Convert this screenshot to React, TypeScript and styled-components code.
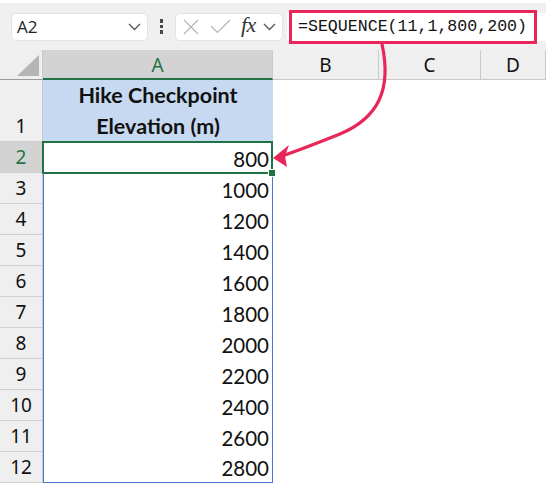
import React from 'react';
import styled, { createGlobalStyle } from 'styled-components';

const GlobalStyle = createGlobalStyle`
  * { box-sizing: border-box; }
  body {
    margin: 0;
    background: #fff;
    overflow: hidden;
  }
`;

const COLS = '43px 230px 106px 102px 1fr';
const GREEN = '#217346';
const RED = '#e8265a';
const SPILL = '#4a78cc';

const Page = styled.div`
  position: relative;
  width: 546px;
  height: 484px;
  overflow: hidden;
  font-family: 'Noto Sans', 'Open Sans', sans-serif;
`;

const Toolbar = styled.div`
  height: 50px;
  background: #f0f0f0;
  display: flex;
  align-items: center;
  padding: 0 0 0 11px;
  border-top: 3px solid #fff;
`;

const NameBox = styled.div`
  width: 137px;
  height: 28px;
  background: #fff;
  border-radius: 5px;
  border: 1px solid #e4e4e4;
  display: flex;
  align-items: center;
  justify-content: space-between;
  padding: 0 6px 0 5px;
  font-family: 'Open Sans', 'Noto Sans', sans-serif;
  font-size: 17px;
  color: #222;
`;

const Dots = styled.div`
  width: 27px;
  display: flex;
  flex-direction: column;
  align-items: center;
  gap: 2px;

  span {
    width: 3.5px;
    height: 3.5px;
    background: #4a4a4a;
  }
`;

const FxButtons = styled.div`
  width: 108px;
  height: 28px;
  background: #fff;
  border-radius: 5px;
  border: 1px solid #e4e4e4;
  display: flex;
  align-items: center;
  padding: 0 4px 0 7px;
`;

const FxLabel = styled.span`
  font-family: 'Liberation Serif', 'DejaVu Serif', serif;
  font-style: italic;
  font-size: 22px;
  color: #333;
  margin: 0 7px 3px 10px;
  letter-spacing: -0.5px;
`;

const FormulaBar = styled.div`
  flex: 1;
  height: 28px;
  margin-left: 4px;
  background: #fff;
  display: flex;
  align-items: center;
  padding-left: 2px;
`;

const Highlight = styled.div`
  height: 34px;
  width: 248px;
  border: 3.5px solid ${RED};
  background: #fff;
  display: flex;
  align-items: center;
  padding-left: 6px;
  font-family: 'Liberation Mono', 'DejaVu Sans Mono', monospace;
  font-size: 16.6px;
  color: #111;
`;

const Row = styled.div<{ $h: number }>`
  display: grid;
  grid-template-columns: ${COLS};
  height: ${({ $h }) => $h}px;
`;

const ColHead = styled.div<{ $active?: boolean }>`
  background: ${({ $active }) => ($active ? '#d3d3d3' : '#efefef')};
  color: ${({ $active }) => ($active ? GREEN : '#111')};
  border-right: 1px solid #c9c9c9;
  border-bottom: ${({ $active }) => ($active ? `2px solid ${GREEN}` : '1px solid #c9c9c9')};
  display: flex;
  align-items: center;
  justify-content: center;
  font-size: 19px;
  padding-top: 1px;
`;

const Corner = styled.div`
  background: #efefef;
  border-right: 1px solid #c9c9c9;
  border-bottom: 1px solid #9a9a9a;
  display: flex;
  align-items: flex-end;
  justify-content: flex-end;
  padding: 0 3px 3px 0;
`;

const RowHead = styled.div<{ $active?: boolean; $bottom?: boolean }>`
  background: ${({ $active }) => ($active ? '#d3d3d3' : '#efefef')};
  color: ${({ $active }) => ($active ? GREEN : '#111')};
  border-right: 1px solid #c9c9c9;
  border-bottom: 1px solid #cfcfcf;
  display: flex;
  align-items: ${({ $bottom }) => ($bottom ? 'flex-end' : 'center')};
  justify-content: center;
  font-size: 19px;
  padding-bottom: ${({ $bottom }) => ($bottom ? '2px' : '0')};
`;

const TitleCell = styled.div`
  background: #c6d9f0;
  font-family: Lato, 'Open Sans', sans-serif;
  font-weight: 700;
  font-size: 21.5px;
  line-height: 31px;
  text-align: center;
  color: #111;
`;

const NumCell = styled.div<{ $selected?: boolean; $last?: boolean }>`
  position: relative;
  border-left: 1px solid ${SPILL};
  border-right: 1px solid ${SPILL};
  border-bottom: ${({ $last }) => ($last ? `1px solid ${SPILL}` : 'none')};
  display: flex;
  align-items: center;
  justify-content: flex-end;
  padding: 2px 3px 0 0;
  font-family: Lato, 'Open Sans', sans-serif;
  font-size: 20.5px;
  color: #111;

  ${({ $selected }) =>
    $selected &&
    `
    &::after {
      content: '';
      position: absolute;
      inset: -1px -1px -1px -2px;
      border: 2px solid ${GREEN};
    }
    &::before {
      content: '';
      position: absolute;
      right: -4px;
      bottom: -4px;
      width: 6px;
      height: 6px;
      background: ${GREEN};
      border: 1px solid #fff;
      z-index: 1;
    }
  `}
`;

const Blank = styled.div``;

const ArrowLayer = styled.svg`
  position: absolute;
  left: 0;
  top: 0;
  pointer-events: none;
`;

const Chevron = () => (
  <svg width="13" height="8" viewBox="0 0 13 8">
    <path d="M1 1 L6.5 6.5 L12 1" fill="none" stroke="#555" strokeWidth="1.3" />
  </svg>
);

const CancelIcon = () => (
  <svg width="16" height="16" viewBox="0 0 16 16">
    <path d="M1 1 L15 15 M15 1 L1 15" stroke="#b3b3b3" strokeWidth="1.2" />
  </svg>
);

const EnterIcon = () => (
  <svg width="21" height="15" viewBox="0 0 21 15" style={{ marginLeft: 11 }}>
    <path d="M1 7 L7.5 13.5 L20 1" fill="none" stroke="#b3b3b3" strokeWidth="1.2" />
  </svg>
);

const values = [800, 1000, 1200, 1400, 1600, 1800, 2000, 2200, 2400, 2600, 2800];

const App: React.FC = () => (
  <Page>
    <GlobalStyle />
    <Toolbar>
      <NameBox>
        <span>A2</span>
        <Chevron />
      </NameBox>
      <Dots>
        <span />
        <span />
        <span />
      </Dots>
      <FxButtons>
        <CancelIcon />
        <EnterIcon />
        <FxLabel>fx</FxLabel>
        <Chevron />
      </FxButtons>
      <FormulaBar>
        <Highlight>=SEQUENCE(11,1,800,200)</Highlight>
      </FormulaBar>
    </Toolbar>

    <Row $h={30}>
      <Corner>
        <svg width="22" height="21" viewBox="0 0 22 21">
          <polygon points="22,0 22,21 0,21" fill="#b5b5b5" />
        </svg>
      </Corner>
      <ColHead $active>A</ColHead>
      <ColHead>B</ColHead>
      <ColHead>C</ColHead>
      <ColHead>D</ColHead>
    </Row>

    <Row $h={62}>
      <RowHead $bottom>1</RowHead>
      <TitleCell>
        Hike Checkpoint
        <br />
        Elevation (m)
      </TitleCell>
      <Blank />
      <Blank />
      <Blank />
    </Row>

    {values.map((v, i) => (
      <Row $h={31} key={v}>
        <RowHead $active={i === 0}>{i + 2}</RowHead>
        <NumCell $selected={i === 0} $last={i === values.length - 1}>
          {v}
        </NumCell>
        <Blank />
        <Blank />
        <Blank />
      </Row>
    ))}

    <ArrowLayer width="546" height="484" viewBox="0 0 546 484">
      <path
        d="M382 44 C 392 90, 378 118, 340 134 C 320 142, 302 149, 285 155"
        fill="none"
        stroke={RED}
        strokeWidth="3.2"
        strokeLinecap="round"
      />
      <polygon points="273,158 289,145 285,156 287,167" fill={RED} />
    </ArrowLayer>
  </Page>
);

export default App;
